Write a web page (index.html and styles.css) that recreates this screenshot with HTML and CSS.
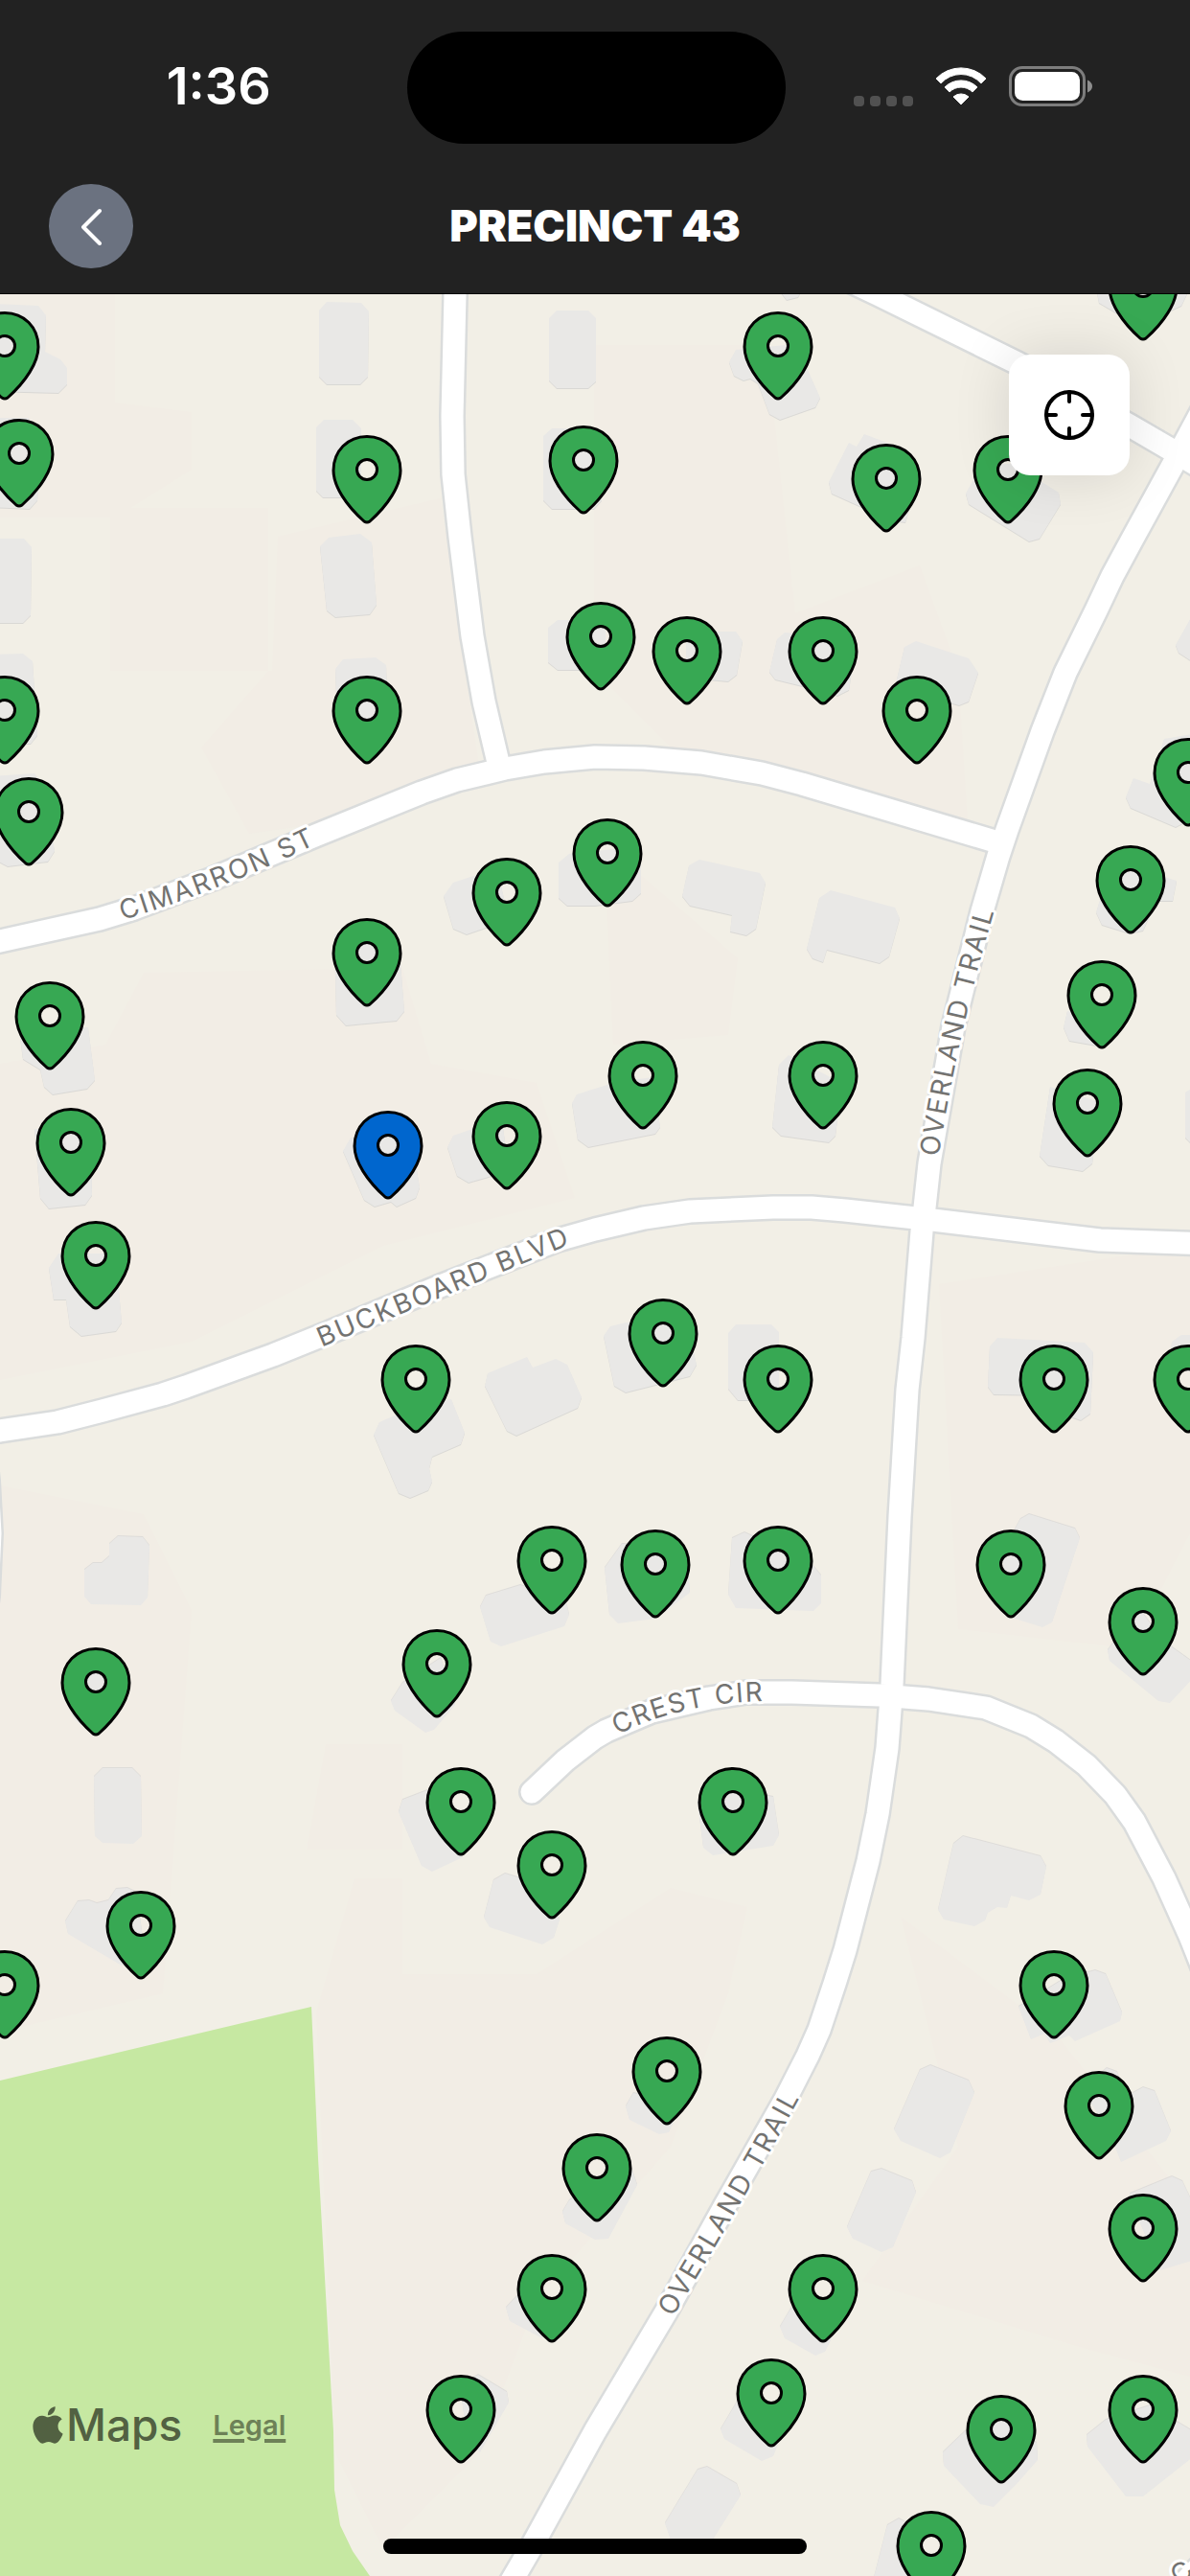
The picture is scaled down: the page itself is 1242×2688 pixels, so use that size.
FILE: index.html
```html
<!DOCTYPE html>
<html lang="en">
<head>
<meta charset="utf-8">
<meta name="viewport" content="width=device-width, initial-scale=1">
<title>Precinct 43</title>
<link rel="stylesheet" href="styles.css">
</head>
<body>
<header class="header">
  <div class="status">
    <div class="status-side status-left"><time class="clock">1:36</time></div>
    <div class="island"></div>
    <div class="status-side status-right">
      <span class="cell"><i></i><i></i><i></i><i></i></span>
      <svg class="wifi" viewBox="0 0 54 41" aria-hidden="true">
        <path d="M1 12A36 36 0 0 1 53 12L48 17A28 28 0 0 0 6 17Z"/>
        <path d="M10 21A24 24 0 0 1 44 21L39 26A17 17 0 0 0 15 26Z"/>
        <path d="M19 31A12 12 0 0 1 35 31L27 39Z"/>
      </svg>
      <svg class="battery" viewBox="0 0 88 42" aria-hidden="true">
        <rect x="1.5" y="1.5" width="77" height="39" rx="12.5" fill="none" stroke="#7d7d7d" stroke-width="3"/>
        <rect x="6" y="6" width="68" height="30" rx="8.5" fill="#fff"/>
        <path d="M82 14.5Q87 17 87 21T82 27.500Z" fill="#8e8e8e"/>
      </svg>
    </div>
  </div>
  <nav class="nav">
    <button class="back" type="button" aria-label="Back">
      <svg viewBox="0 0 88 88" aria-hidden="true"><path d="M53 28L36 45L53 62"/></svg>
    </button>
    <h1 class="title">PRECINCT 43</h1>
  </nav>
</header>

<main class="map">
  <svg class="canvas" viewBox="0 307 1242 2381" preserveAspectRatio="xMidYMin slice" role="img" aria-label="Map of precinct 43">
    <defs>
      <g id="pin">
        <path d="M0-34.500C-20-34.500-35-19.500-35 1C-35 17-22 37-3 54Q0 56 3 54C22 37 35 17 35 1C35-19.500 20-34.500 0-34.500ZM10.500 0A10.500 10.500 0 1 1-10.500 0A10.500 10.500 0 1 1 10.500 0Z"/>
      </g>
      <g id="streets">
        <path d="M475 290L475 307L472 434L473 495L480 560L493 664L505 732L521 800"/>
        <path d="M-20 986L0 982L104 959L140 948L222 917L329 872L440 827L477 814L527 802L568 795L621 790L672 791L732 796L795 807L837 818L1045 880"/>
        <path d="M1270 400L1227 480L1181 564L1161 601L1144 637L1112 702L1088 763L1051 866L1042 893L1025 951L995 1071L970 1214L965 1260L962 1285L953 1396L947 1450L939 1583L931 1758L926 1824L916 1893L906 1942L882 2035L871 2070L855 2118L843 2145L819 2192L757 2301L696 2411L621 2537L555 2657L520 2717"/>
        <path d="M880 290L916 307L1062 379L1179 444L1227 472L1262 493"/>
        <path d="M-20 1495L0 1493L60 1484L107 1472L170 1455L194 1447L285 1414L342 1391L462 1341L582 1294L621 1283L672 1271L720 1264L807 1260L847 1260L882 1263L965 1272L1148 1294L1262 1298"/>
        <path d="M555 1870L590 1837L621 1813L633 1806L680 1786L740 1772L779 1766L827 1766L918 1769L969 1773L1029 1782L1076 1801L1102 1817L1134 1842L1164 1873L1184 1901L1215 1960L1242 2020L1262 2070"/>
        <path d="M-18 1500L-13 1545L-10 1600L-13 1665L-20 1720"/>
        <path d="M1222 2710L1262 2668"/>
      </g>
      <path id="l-cimarron" d="M127 950Q231 918 325 872"/>
      <path id="l-buckboard" d="M333 1396Q462 1342 592 1289"/>
      <path id="l-overland-n" d="M970 1204Q991 1072 1028 948"/>
      <path id="l-overland-s" d="M694 2412Q764 2298 826 2184"/>
      <path id="l-crest" d="M641 1801Q707 1767 797 1765"/>
    </defs>

    <rect class="land" x="0" y="307" width="1242" height="2381"/>

    <g class="tint">
      <path d="M0 307H120V420L200 430V490L120 540H0Z"/>
      <path d="M115 530H280V700L210 780L260 870L400 850L500 800L460 520L290 560L284 700H115Z"/>
      <path d="M620 360H800L830 640L960 590L1000 700L1010 860L700 780L620 700Z"/>
      <path d="M150 1015L420 1010L450 1110L560 1130L600 1250L400 1300L200 1400L0 1440V1110L110 1090Z"/>
      <path d="M630 880L770 1000L760 1080L640 1090Z"/>
      <path d="M0 1550L150 1580L200 1680L170 2080L0 2120Z"/>
      <path d="M340 1820H420V1930H320ZM370 1960H420V2060H560L700 1970L780 1990L760 2080L700 2240L560 2400L500 2560L400 2660L350 2560L330 2100Z"/>
      <path d="M980 1340L1242 1300V1600L1180 1720L1000 1700Z"/>
      <path d="M940 2000L1100 2120L1242 2300V2480L1130 2450L900 2380L1000 2240Z"/>
    </g>

    <path class="park" d="M0 2171L325 2094L332 2252L348 2537L349 2598L355 2635L368 2662L386 2688H0Z"/>

    <g class="buildings">
      <path d="M341 315L377 316L385 325L384 393L376 401H341L333 393V324Z"/>
      <path d="M-9 317L40 319L48 329L47 367L63 375L70 384V401L61 410L-9 408Z"/>
      <path d="M-9 436H30L40 500L39 522L31 531L-9 529Z"/>
      <path d="M-9 562H25L33 571L32 642L24 650H-9Z"/>
      <path d="M-9 683L24 682L34 690L39 767L32 776H-9Z"/>
      <path d="M-9 810L36 807L45 818L57 888L50 899L8 904L-9 895Z"/>
      <path d="M338 438H368L377 447V519H337L330 512V446Z"/>
      <path d="M343 561L376 557L388 566L393 631L386 641L350 644L341 637L334 570Z"/>
      <path d="M358 688L392 686L403 694L405 750H352L350 698Z"/>
      <path d="M581 324H614L622 332V398L614 405H581L573 397V332Z"/>
      <path d="M576 447H620L628 455V522L620 531H576L567 522V455Z"/>
      <path d="M582 647H632V699H582L572 691V655Z"/>
      <path d="M811 300L821 313L833 310L838 300Z"/>
      <path d="M768 365L761 378L766 392L776 397L783 395L791 400L803 432L814 438L851 425L856 415L843 386L820 360Z"/>
      <path d="M1144 300L1147 316L1166 327L1220 325L1233 319L1242 300Z"/>
      <path d="M902 453L894 466L886 462L865 503L868 515L930 543L945 545L954 514L934 465Z"/>
      <path d="M1008 515L1011 526L1074 565L1085 562L1107 526L1105 514L1057 484H1025Z"/>
      <path d="M768 659L775 669L769 704L760 711L716 707V659Z"/>
      <path d="M819 660L811 667L803 701L809 709L866 723L874 726L886 720L894 667Z"/>
      <path d="M956 669L1011 687L1021 702L1011 732L1001 736L934 717L944 675Z"/>
      <path d="M1250 632L1227 673L1230 681L1250 694Z"/>
      <path d="M1183 812L1175 832L1180 843L1227 863L1250 851V765L1215 771L1200 818Z"/>
      <path d="M473 921L463 935L473 969L487 975L531 960L519 906Z"/>
      <path d="M594 891L583 900V937L592 945H621L660 940L669 932V900L650 885Z"/>
      <path d="M349 975L351 1059L361 1070L414 1065L422 1055L418 1005L412 971Z"/>
      <path d="M20 1074L24 1105L42 1116L46 1134L55 1142L91 1136L99 1127L92 1072Z"/>
      <path d="M36 1178L42 1250L51 1261L89 1257L96 1247L95 1180Z"/>
      <path d="M61 1308L51 1323L56 1356H69L73 1384L85 1394L121 1389L127 1380L124 1346L119 1308Z"/>
      <path d="M366 1187L358 1201L380 1252L391 1259L408 1254L414 1259L434 1250L438 1239L430 1190L396 1185Z"/>
      <path d="M499 1176L473 1185L467 1197L477 1227L489 1234L531 1222L525 1176Z"/>
      <path d="M640 1130L602 1142L597 1151L603 1189L614 1197L684 1183L689 1176L681 1124Z"/>
      <path d="M550 1416L556 1427L580 1418L592 1424L607 1458L603 1469L539 1498L529 1493L506 1446L509 1433Z"/>
      <path d="M390 1497L396 1484L428 1470L471 1460L485 1495L481 1507L451 1520L448 1532L451 1546L447 1555L428 1563L416 1558Z"/>
      <path d="M730 897L793 911L799 921L789 969L779 976L762 972L764 955L720 945L712 935L719 903Z"/>
      <path d="M867 929L934 947L939 958L928 998L918 1005L863 991L859 1004L848 1000L842 990L855 937Z"/>
      <path d="M1144 952L1150 965L1179 974L1193 971L1207 940H1224L1228 919L1215 915L1160 900Z"/>
      <path d="M1114 1055L1110 1072L1116 1086L1150 1092L1160 1060Z"/>
      <path d="M1096 1134L1085 1206L1094 1216L1130 1222L1140 1214L1148 1150Z"/>
      <path d="M1250 1132L1237 1140V1187L1250 1200Z"/>
      <path d="M823 1101L813 1111L806 1176L815 1185L865 1192L872 1185L878 1130Z"/>
      <path d="M653 1380L637 1384L630 1394L641 1446L653 1453L720 1436L727 1424L716 1377Z"/>
      <path d="M768 1382H805L813 1390V1461H770L760 1449V1391Z"/>
      <path d="M1041 1396L1132 1401L1141 1411L1138 1475L1128 1482L1108 1475L1096 1456L1037 1455L1031 1447L1033 1405Z"/>
      <path d="M1221 1430L1223 1400L1233 1393H1250V1430Z"/>
    </g>
    <g class="buildings buildings-south">
      <path d="M123 1603L149 1604L156 1613L154 1667L147 1675L95 1674L88 1666V1638L97 1631H106L114 1624V1611Z"/>
      <path d="M107 1845H138L147 1854L148 1916L139 1924L107 1923L99 1916L98 1854Z"/>
      <path d="M72 1780L76 1792L84 1800L110 1795V1745H90Z"/>
      <path d="M93 1983L101 1986L113 1983L121 1971L133 1970L143 1975L150 2032L127 2051L71 2018L68 2005L81 1984Z"/>
      <path d="M507 1665L543 1654L590 1668L594 1685L589 1697L523 1718L512 1713L501 1677Z"/>
      <path d="M420 1756L408 1775L412 1785L444 1808L453 1805L475 1779L460 1730Z"/>
      <path d="M420 1878L446 1868L470 1920L483 1938L451 1953L440 1947L416 1891Z"/>
      <path d="M515 1962L527 1955L560 1965L584 2003L578 2022L566 2029L511 2011L505 2001Z"/>
      <path d="M649 1611L631 1636L636 1685L645 1694L684 1689L720 1662L716 1615Z"/>
      <path d="M777 1599L764 1605L760 1664L768 1678L849 1681L857 1673V1644L847 1632Z"/>
      <path d="M1074 1580L1122 1595L1127 1605L1098 1693L1088 1698L1053 1687L1046 1620L1065 1585Z"/>
      <path d="M1156 1722L1158 1733L1209 1775L1221 1777L1250 1746V1738L1215 1713L1190 1680L1164 1711Z"/>
      <path d="M728 1881L734 1928L744 1936L807 1926L813 1915L807 1875L760 1865Z"/>
      <path d="M1005 1916L1086 1937L1092 1948L1086 1977L1074 1983L1055 1978L1051 1991L1041 1990L1031 1996L1028 2004L1017 2010L985 2003L979 1993L995 1924Z"/>
      <path d="M1143 2056L1154 2060L1171 2100L1169 2109L1122 2130L1116 2124L1096 2132L1090 2122L1076 2128L1063 2094L1110 2065Z"/>
      <path d="M971 2155L1011 2171L1017 2184L992 2246L981 2252L940 2234L933 2222L960 2160Z"/>
      <path d="M920 2263L952 2276L956 2288L932 2345L920 2350L890 2336L884 2324L909 2266Z"/>
      <path d="M738 2574L769 2592L773 2604L744 2650H700L694 2633L728 2577Z"/>
      <path d="M661 2184L653 2198L657 2212L688 2227L698 2225L712 2196Z"/>
      <path d="M594 2296L587 2308L590 2320L621 2337L635 2336L665 2280L657 2256Z"/>
      <path d="M543 2392L528 2408L532 2422L566 2440L580 2400Z"/>
      <path d="M499 2478L529 2496L531 2507L501 2559L487 2540L480 2490Z"/>
      <path d="M827 2406L814 2428L819 2440L851 2458L861 2454L878 2420Z"/>
      <path d="M771 2503L752 2535L756 2545L795 2568L807 2563L819 2533Z"/>
      <path d="M1007 2537L984 2559L985 2573L1023 2613L1037 2616L1061 2592L1083 2567L1082 2549L1040 2520Z"/>
      <path d="M1154 2525L1134 2541L1135 2553L1175 2605L1193 2605L1250 2560V2540L1200 2510Z"/>
      <path d="M938 2628L926 2635L912 2690H970L960 2640Z"/>
      <path d="M1155 2158L1166 2162L1175 2188L1193 2178L1205 2182L1222 2224L1217 2234L1170 2256L1160 2230L1130 2180Z"/>
      <path d="M1179 2289L1223 2271L1234 2276L1250 2310V2357L1211 2369L1190 2320Z"/>
    </g>

    <use href="#streets" class="casing"/>
    <use href="#streets" class="paving"/>

    <g class="street-names">
      <text dy="10"><textPath href="#l-cimarron" startOffset="50%">CIMARRON ST</textPath></text>
      <text dy="10"><textPath href="#l-buckboard" startOffset="50%">BUCKBOARD BLVD</textPath></text>
      <text dy="10"><textPath href="#l-overland-n" startOffset="50%">OVERLAND TRAIL</textPath></text>
      <text dy="10"><textPath href="#l-overland-s" startOffset="50%">OVERLAND TRAIL</textPath></text>
      <text dy="10"><textPath href="#l-crest" startOffset="50%">CREST CIR</textPath></text>
      <text transform="translate(1240 2691) rotate(-40)">C</text>
    </g>

    <g class="pins">
      <use href="#pin" x="1193" y="299"/>
      <use href="#pin" x="5" y="361"/>
      <use href="#pin" x="812" y="361"/>
      <use href="#pin" x="20" y="473"/>
      <use href="#pin" x="609" y="480"/>
      <use href="#pin" x="383" y="490"/>
      <use href="#pin" x="1052" y="490"/>
      <use href="#pin" x="925" y="499"/>
      <use href="#pin" x="627" y="664"/>
      <use href="#pin" x="717" y="679"/>
      <use href="#pin" x="859" y="679"/>
      <use href="#pin" x="5" y="741"/>
      <use href="#pin" x="383" y="741"/>
      <use href="#pin" x="957" y="741"/>
      <use href="#pin" x="1240" y="806"/>
      <use href="#pin" x="30" y="847"/>
      <use href="#pin" x="634" y="890"/>
      <use href="#pin" x="1180" y="918"/>
      <use href="#pin" x="529" y="931"/>
      <use href="#pin" x="383" y="994"/>
      <use href="#pin" x="1150" y="1038"/>
      <use href="#pin" x="52" y="1060"/>
      <use href="#pin" x="671" y="1122"/>
      <use href="#pin" x="859" y="1122"/>
      <use href="#pin" x="1135" y="1151"/>
      <use href="#pin" x="529" y="1185"/>
      <use href="#pin" x="74" y="1192"/>
      <use href="#pin" x="405" y="1195" class="selected"/>
      <use href="#pin" x="100" y="1310"/>
      <use href="#pin" x="692" y="1391"/>
      <use href="#pin" x="434" y="1439"/>
      <use href="#pin" x="812" y="1439"/>
      <use href="#pin" x="1100" y="1439"/>
      <use href="#pin" x="1240" y="1439"/>
      <use href="#pin" x="576" y="1628"/>
      <use href="#pin" x="812" y="1628"/>
      <use href="#pin" x="684" y="1632"/>
      <use href="#pin" x="1055" y="1632"/>
      <use href="#pin" x="1193" y="1692"/>
      <use href="#pin" x="456" y="1736"/>
      <use href="#pin" x="100" y="1755"/>
      <use href="#pin" x="481" y="1880"/>
      <use href="#pin" x="765" y="1880"/>
      <use href="#pin" x="576" y="1946"/>
      <use href="#pin" x="147" y="2009"/>
      <use href="#pin" x="5" y="2071"/>
      <use href="#pin" x="1100" y="2071"/>
      <use href="#pin" x="696" y="2161"/>
      <use href="#pin" x="1147" y="2197"/>
      <use href="#pin" x="623" y="2262"/>
      <use href="#pin" x="1193" y="2325"/>
      <use href="#pin" x="576" y="2388"/>
      <use href="#pin" x="859" y="2388"/>
      <use href="#pin" x="805" y="2497"/>
      <use href="#pin" x="481" y="2514"/>
      <use href="#pin" x="1193" y="2514"/>
      <use href="#pin" x="1045" y="2535"/>
      <use href="#pin" x="972" y="2656"/>
    </g>
  </svg>

  <button class="locate" type="button" aria-label="Center on my location">
    <svg viewBox="0 0 56 56" aria-hidden="true">
      <circle cx="28" cy="28" r="24"/>
      <path d="M28 4V14M28 42V52M4 28H14M42 28H52"/>
    </svg>
  </button>

  <footer class="attribution">
    <span class="brand">
      <svg viewBox="2 0 20 24" aria-hidden="true"><path d="M12.152 6.896c-.948 0-2.415-1.078-3.96-1.040-2.040.027-3.910 1.183-4.961 3.014-2.117 3.675-.546 9.103 1.519 12.090 1.013 1.454 2.208 3.090 3.792 3.039 1.520-.065 2.090-.987 3.935-.987 1.831 0 2.350.987 3.960.948 1.637-.026 2.676-1.480 3.676-2.948 1.156-1.688 1.636-3.325 1.662-3.415-.039-.013-3.182-1.221-3.220-4.857-.026-3.040 2.480-4.494 2.597-4.559-1.429-2.090-3.623-2.324-4.390-2.376-2-.156-3.675 1.090-4.610 1.090zM15.530 3.830c.843-1.012 1.400-2.427 1.245-3.830-1.207.052-2.662.805-3.532 1.818-.780.896-1.454 2.338-1.273 3.714 1.338.104 2.715-.688 3.559-1.701"/></svg>
      <span>Maps</span>
    </span>
    <a class="legal" href="#legal">Legal</a>
  </footer>

  <div class="home-indicator"></div>
</main>
</body>
</html>
```

FILE: styles.css
```css
* {
  box-sizing: border-box;
}

body {
  margin: 0;
  min-height: 100vh;
  display: flex;
  flex-direction: column;
  font-family: Inter, "Liberation Sans", sans-serif;
  background: #222;
}

button {
  padding: 0;
  border: 0;
  cursor: pointer;
}

svg {
  display: block;
}

/* Header */

.header {
  background: #222;
  color: #fff;
  border-bottom: 1px solid #000;
}

.status {
  display: flex;
  align-items: center;
  padding-top: 33px;
}

.status-side {
  flex: 1;
  display: flex;
  align-items: center;
  justify-content: center;
  padding-bottom: 3px;
}

.status-left {
  padding-left: 32px;
}

.status-right {
  gap: 23px;
  padding-right: 30px;
}

.clock {
  font-size: 54px;
  font-weight: 600;
  line-height: 64px;
}

.island {
  width: 395px;
  height: 117px;
  border-radius: 59px;
  background: #000;
}

.cell {
  display: flex;
  gap: 6px;
  align-self: flex-end;
}

.cell i {
  width: 11px;
  height: 11px;
  border-radius: 4px;
  background: #515151;
}

.wifi {
  width: 54px;
  height: 41px;
  fill: #fff;
  stroke: #fff;
  stroke-width: 1;
  stroke-linejoin: round;
}

.battery {
  width: 88px;
  height: 42px;
}

.nav {
  display: grid;
  grid-template-columns: 88px 1fr 88px;
  align-items: center;
  padding: 42px 51px 26px;
}

.back {
  width: 88px;
  height: 88px;
  border-radius: 50%;
  background: #6b7280;
}

.back path {
  fill: none;
  stroke: #fff;
  stroke-width: 4;
  stroke-linecap: round;
  stroke-linejoin: round;
}

.title {
  margin: 0;
  font-size: 45px;
  font-weight: 900;
  line-height: 56px;
  text-align: center;
}

/* Map */

.map {
  flex: 1;
  position: relative;
  overflow: hidden;
  display: flex;
  flex-direction: column;
  justify-content: space-between;
  background: #f2efe6;
}

.canvas {
  position: absolute;
  inset: 0;
  width: 100%;
  height: 100%;
}

.land {
  fill: #f2efe6;
}

.tint {
  fill: #f2ede5;
}

.park {
  fill: #c6e8a2;
}

.buildings {
  fill: #e9e8e6;
  filter: drop-shadow(0 1px 0 #d9d8d5);
}

.buildings-south {
  filter: drop-shadow(0 -1px 0 #dedcd9);
}

.casing,
.paving {
  fill: none;
  stroke: #dadcdc;
  stroke-width: 28px;
  stroke-linecap: round;
  stroke-linejoin: round;
}

.paving {
  stroke: #fff;
  stroke-width: 23px;
}

.street-names {
  font-size: 28px;
  letter-spacing: 2px;
  text-anchor: middle;
  fill: #737371;
  stroke: #fff;
  stroke-width: 6px;
  stroke-linejoin: round;
  paint-order: stroke;
}

.pins {
  fill: #37a853;
  stroke: #000;
  stroke-width: 3px;
  stroke-linejoin: round;
}

.pins .selected {
  fill: #0066ce;
}

.locate {
  position: relative;
  align-self: flex-end;
  display: grid;
  place-items: center;
  width: 126px;
  height: 126px;
  margin: 63px 63px 0 0;
  border-radius: 22px;
  background: #fff;
  box-shadow: 0 0 60px rgba(0, 0, 0, 0.12);
}

.locate svg {
  width: 56px;
  height: 56px;
  fill: none;
  stroke: #000;
  stroke-width: 4;
  stroke-linecap: round;
}

.attribution {
  position: relative;
  display: flex;
  align-items: center;
  gap: 32px;
  margin: auto 0 128px 34px;
}

.brand {
  display: flex;
  align-items: center;
  gap: 3px;
  font-size: 46px;
  font-weight: 500;
  line-height: 60px;
  color: #526142;
}

.brand svg {
  width: 32px;
  height: 39px;
  fill: currentColor;
}

.legal {
  font-size: 29px;
  font-weight: 600;
  color: #6d8157;
  text-decoration-thickness: 4px;
  text-underline-offset: 4px;
}

.home-indicator {
  position: absolute;
  bottom: 23px;
  left: 50%;
  width: 442px;
  height: 16px;
  margin-left: -221px;
  border-radius: 8px;
  background: #000;
}
```
